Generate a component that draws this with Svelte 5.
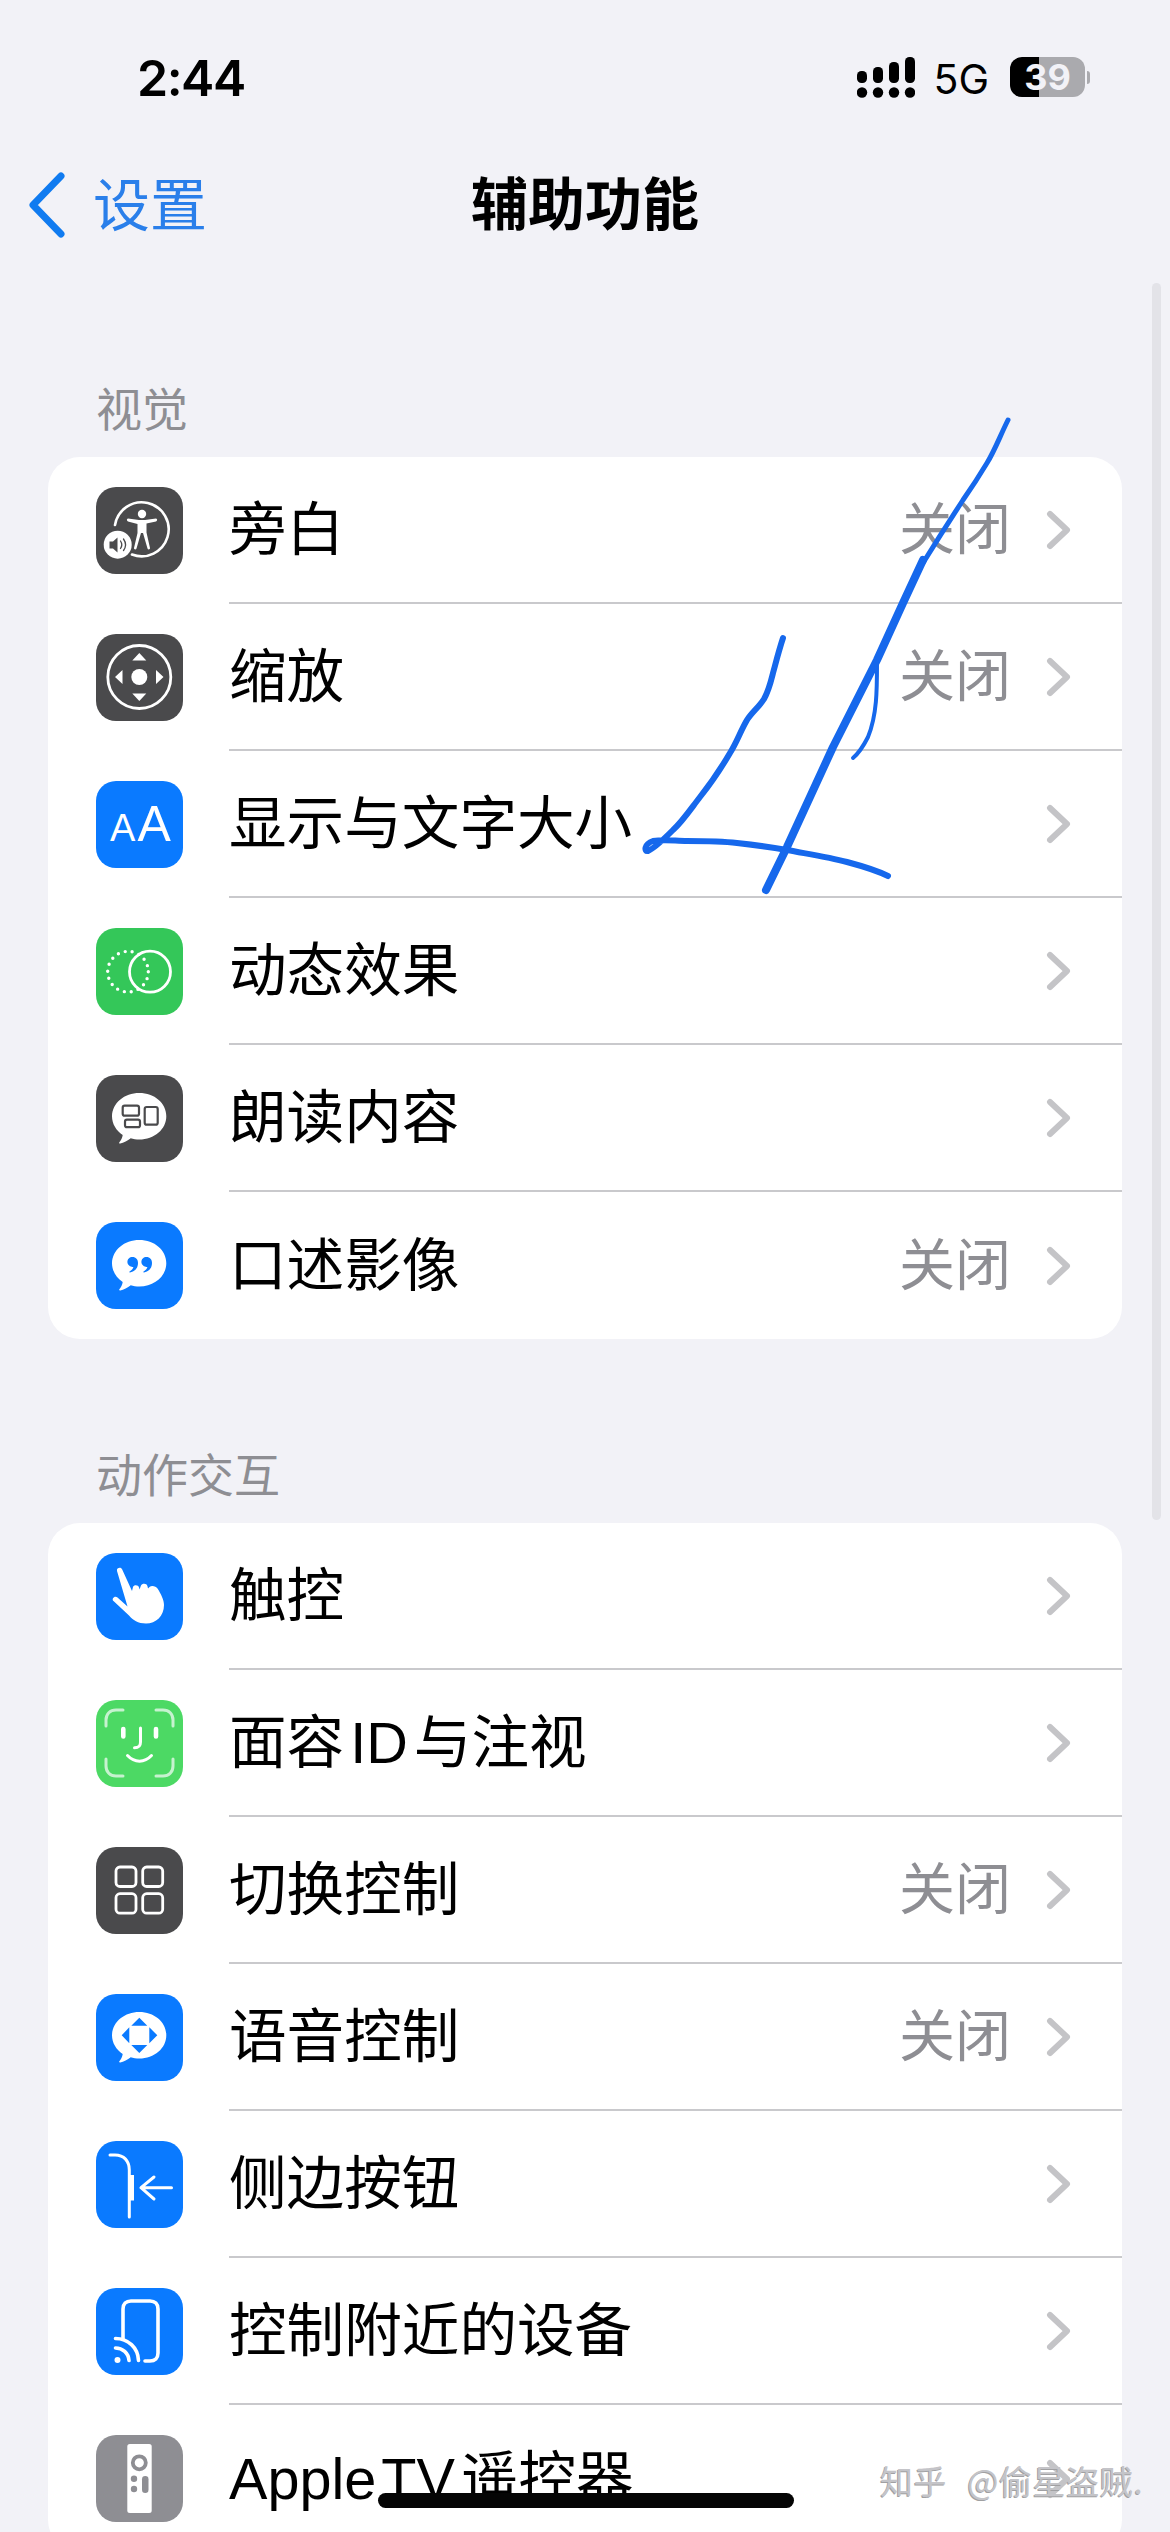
<script lang="ts">
	const cjk = '"Noto Sans CJK SC"';

	const visual = [
		{ icon: 'voiceover', label: '旁白', value: '关闭' },
		{ icon: 'zoom', label: '缩放', value: '关闭' },
		{ icon: 'text', label: '显示与文字大小' },
		{ icon: 'motion', label: '动态效果' },
		{ icon: 'spoken', label: '朗读内容' },
		{ icon: 'audio', label: '口述影像', value: '关闭' }
	];

	const interaction = [
		{ icon: 'touch', label: '触控' },
		{ icon: 'face', label: '面容 ID 与注视' },
		{ icon: 'switch', label: '切换控制', value: '关闭' },
		{ icon: 'voice', label: '语音控制', value: '关闭' },
		{ icon: 'side', label: '侧边按钮' },
		{ icon: 'nearby', label: '控制附近的设备' },
		{ icon: 'remote', label: 'Apple TV 遥控器' }
	];

	const iconBg: Record<string, string> = {
		voiceover: 'dark',
		zoom: 'dark',
		text: 'blue',
		motion: 'green',
		spoken: 'dark',
		audio: 'blue',
		touch: 'blue',
		face: 'lime',
		switch: 'dark',
		voice: 'blue',
		side: 'blue',
		nearby: 'blue',
		remote: 'grey'
	};

	const bubble = 'M43.3 18c15 0 27 10 27 23.2 0 13-12 23.3-27 23.3-3 0-6-.4-8.6-1.2-3 2.500-7 4.700-10.500 5.300-1 .1-1.400-.7-.8-1.400 1.500-1.800 3-4.500 3.300-7.300-6.500-4.300-10.700-11-10.700-18.700C16.300 28 28.300 18 43.300 18z';
</script>

{#snippet glyph(name: string)}
	<svg class="glyph" viewBox="0 0 87 87">
		{#if name === 'voiceover'}
			<path class="line" d="M19 38A27 27 0 1 1 36 67.500" stroke-width="2.600" />
			<circle class="fill" cx="46" cy="27" r="4.200" />
			<path class="fill" d="M32 31.500l11 1.500h6l11-1.500c1.500 0 1.500 2.500 0 3l-9.500 2v9l3.500 15.500c.3 1.500-2 2-2.500.6L47 46h-2l-4.500 15.600c-.5 1.400-2.800.9-2.500-.6L41.500 46v-9L32 34.500c-1.500-.5-1.500-3 0-3z" />
			<circle class="fill" cx="21.700" cy="57.700" r="14" />
			<path class="ink" d="M13.500 54.500h3.500l4.500-4v15l-4.500-4h-3.500z" />
			<path class="ink-line" d="M24.500 54c1.500 2.200 1.500 5.300 0 7.500M27.500 52c2.500 3.500 2.500 8 0 11.500" stroke-width="1.300" />
		{:else if name === 'zoom'}
			<circle class="line" cx="43.300" cy="43" r="31.500" stroke-width="2.800" />
			<circle class="fill" cx="43.300" cy="43" r="8" />
			<path class="fill" d="M43.300 19l7 7.500h-14zM43.300 67l7-7.500h-14zM19 43l7.500-7v14zM67.500 43l-7.500-7v14z" />
		{:else if name === 'text'}
			<text class="aa small" x="14" y="60">A</text>
			<text class="aa big" x="41.500" y="60">A</text>
		{:else if name === 'motion'}
			<circle class="dots" cx="32" cy="43.700" r="20.300" stroke-width="3.400" />
			<circle class="line" cx="54" cy="43.700" r="20.500" stroke-width="2.800" />
		{:else if name === 'spoken'}
			<path class="fill" d={bubble} />
			<rect class="ink-line" x="26.700" y="30.700" width="16.300" height="10" rx="2" stroke-width="2.200" />
			<rect class="ink-line" x="29" y="44.700" width="15" height="7.500" rx="2" stroke-width="2.200" />
			<rect class="ink-line" x="48.700" y="32" width="13" height="17.700" rx="2" stroke-width="2.200" />
		{:else if name === 'audio'}
			<path class="fill" d={bubble} />
			<path class="ink" d="M36.500 35c3.300 0 5.500 2.500 5.500 6 0 5-3 8.500-8 9.500-.7.1-1-.6-.4-1 2-1.200 3.400-2.800 3.800-4.500-3.300 0-6-2.200-6-5 0-3 2.200-5 5.100-5zM50.500 35c3.300 0 5.500 2.500 5.500 6 0 5-3 8.500-8 9.500-.7.1-1-.6-.4-1 2-1.200 3.400-2.800 3.800-4.500-3.300 0-6-2.200-6-5 0-3 2.200-5 5.100-5z" />
		{:else if name === 'touch'}
			<path class="fill" d="M21 18c-.8-3 4-4.500 5.200-1.500L36 38l1-4c.7-2.500 5.500-2.500 6 .5l.5 2 1.500-4c1-2.500 6-2.500 6.500.7l.5 2.300 1.500-1.500c2-2 6.500-1 8 1.500C65 41 68 47 68 52c0 11-8 18.500-18 18.500-8 0-13-3.500-17-8L17.500 48c-2.500-2.500 1.500-6 4-3.500l10 9z" />
		{:else if name === 'face'}
			<path class="soft" d="M10 26v-6c0-6 4-10 10-10h7M60 10h7c6 0 10 4 10 10v6M10 59v7c0 6 4 10 10 10h7M60 76h7c6 0 10-4 10-10v-7" stroke-width="3" />
			<path class="line" d="M27.300 29v7.500M60 29v7.500" stroke-width="4.600" />
			<path class="line" d="M44.500 28v14c0 4-1.500 5.800-6 5.800M31.500 55.500c7 7.500 17 7.500 24 0" stroke-width="3" />
		{:else if name === 'switch'}
			<rect class="line" x="20" y="20" width="20" height="19.500" rx="4" stroke-width="2.800" />
			<rect class="line" x="46.700" y="20" width="20" height="19.500" rx="4" stroke-width="2.800" />
			<rect class="line" x="20" y="46.700" width="20" height="19.500" rx="4" stroke-width="2.800" />
			<rect class="line" x="46.700" y="46.700" width="20" height="19.500" rx="4" stroke-width="2.800" />
		{:else if name === 'voice'}
			<path class="fill" d={bubble} />
			<path class="ink" d="M43.300 23.700l8 8h-16zM43.300 59l8-8h-16zM25.700 41.300l7.600-8v16zM61.300 41.300l-8-8v16z" />
		{:else if name === 'side'}
			<path class="line" d="M14 14h5c9 0 14.300 6 14.300 15v47" stroke-width="3" />
			<path class="fill" d="M33 34h5v25.500h-5z" />
			<path class="line" d="M75.500 46.700H45M58 36L45 46.700 58 58" stroke-width="3" />
		{:else if name === 'nearby'}
			<path class="line" d="M27 51V21c0-5 3-8 8-8h19c5 0 8 3 8 8v44c0 5-3 8-8 8h-5" stroke-width="3.600" />
			<circle class="fill" cx="21.500" cy="72" r="3" />
			<path class="line" d="M19.500 60c7 0 13 5 13.500 12.500M19.500 50.500c12.500 0 22.500 9 23 22" stroke-width="3.600" />
		{:else if name === 'remote'}
			<rect class="fill" x="31.300" y="9" width="24.400" height="69" rx="2.500" />
			<circle class="ink-line" cx="43.300" cy="27.800" r="6.500" stroke-width="3.800" />
			<circle class="ink" cx="38" cy="43.800" r="3.200" />
			<circle class="ink" cx="38" cy="54" r="3.200" />
			<rect class="ink" x="46" y="41" width="6.500" height="17" rx="3.250" />
		{/if}
	</svg>
{/snippet}

{#snippet group(rows: { icon: string; label: string; value?: string }[])}
	<ul class="card">
		{#each rows as row}
			<li class="row">
				<span class="icon {iconBg[row.icon]}">{@render glyph(row.icon)}</span>
				<div class="row-body">
					<span class="label">{row.label}</span>
					{#if row.value}
						<span class="value">{row.value}</span>
					{/if}
					<svg class="chevron" viewBox="0 0 26 40">
						<path d="M4 4l17 16L4 36" />
					</svg>
				</div>
			</li>
		{/each}
	</ul>
{/snippet}

<div class="screen" style:--cjk={cjk}>
	<header class="status">
		<span class="time">2:44</span>
		<div class="status-right">
			<svg class="signal" viewBox="0 0 58 41">
				<rect x="0" y="14" width="10" height="12" rx="4.500" />
				<rect x="16" y="10" width="10" height="16" rx="4.500" />
				<rect x="32" y="5" width="10" height="21" rx="4.500" />
				<rect x="48" y="0" width="10" height="26" rx="4.500" />
				<circle cx="5" cy="35.500" r="5.200" />
				<circle cx="21" cy="35.500" r="5.200" />
				<circle cx="37" cy="35.500" r="5.200" />
				<circle cx="53" cy="35.500" r="5.200" />
			</svg>
			<span class="net">5G</span>
			<div class="battery">
				<span class="level">39</span>
			</div>
			<span class="battery-tip"></span>
		</div>
	</header>

	<nav class="nav">
		<a class="back" href="#back">
			<svg class="back-arrow" viewBox="0 0 40 66">
				<path d="M34 4L6 33l28 29" />
			</svg>
			<span class="back-text">设置</span>
		</a>
		<h1 class="title">辅助功能</h1>
	</nav>

	<h2 class="section first">视觉</h2>
	{@render group(visual)}

	<h2 class="section">动作交互</h2>
	{@render group(interaction)}

	<span class="scrollbar"></span>

	<svg class="scribble" viewBox="0 0 1170 2532">
		<path stroke-width="5" d="M1008 420C1000 436 995 450 987 463C978 478 970 490 963 500C950 520 936 542 923 563" />
		<path stroke-width="8" d="M923 560L903 603L877 660L833 747L787 847L766 890" />
		<path stroke-width="4" d="M877 663C877 690 877 715 868 737C864 745 860 752 853 758" />
		<path stroke-width="6" d="M783 638C779 650 776 662 773 673C770 685 769 690 764 699C759 707 752 712 747 720C740 732 737 742 730 753C720 770 712 782 700 797C690 810 682 822 673 830C665 838 655 848 648 851C644 852 644 844 653 841C665 839 675 841 687 841C705 841 720 841 737 843C755 845 770 847 787 850C808 854 828 857 847 862C862 866 876 870 888 876" />
	</svg>

	<span class="watermark">知乎 @偷星盗贼.</span>
	<span class="home-bar"></span>
</div>

<style>
	:global(body) {
		margin: 0;
		background: #f2f2f7;
	}

	.screen {
		position: relative;
		width: 1170px;
		height: 2532px;
		overflow: hidden;
		background: #f2f2f7;
		color: #000;
		font-family: "Liberation Sans", "Noto Sans CJK SC", sans-serif;
	}

	.status {
		height: 157px;
		display: flex;
		justify-content: space-between;
		padding: 52px 80px 0 137px;
		box-sizing: border-box;
	}

	.time {
		font-family: Inter, sans-serif;
		font-size: 50px;
		font-weight: 600;
		letter-spacing: -1.5px;
		line-height: 52px;
	}

	.status-right {
		display: flex;
		align-items: flex-start;
		padding-top: 5px;
	}

	.signal {
		width: 58px;
		height: 41px;
	}

	.net {
		font-family: Inter, sans-serif;
		font-size: 41px;
		line-height: 41px;
		margin: 2px 0 0 18px;
	}

	.battery {
		width: 75px;
		height: 40px;
		margin-left: 21px;
		border-radius: 12px;
		background: linear-gradient(90deg, #000 29px, #aaaaae 29px);
		display: flex;
		align-items: center;
		justify-content: center;
	}

	.level {
		color: #f2f2f7;
		font-family: Inter, sans-serif;
		font-size: 36px;
		font-weight: 700;
		line-height: 40px;
	}

	.battery-tip {
		width: 3px;
		height: 13px;
		margin: 14px 0 0 2px;
		background: #aaaaae;
		border-radius: 0 3px 3px 0;
	}

	.nav {
		position: relative;
		height: 96px;
		display: flex;
		align-items: center;
		justify-content: center;
	}

	.back {
		position: absolute;
		left: 27px;
		top: 0;
		height: 96px;
		display: flex;
		align-items: center;
		gap: 26px;
		color: #2a7fea;
		font-size: 57px;
		text-decoration: none;
		font-family: var(--cjk), sans-serif;
	}

	.back-text {
		margin-bottom: 8px;
	}

	.back-arrow {
		width: 40px;
		height: 66px;
		fill: none;
		stroke: #107bf0;
		stroke-width: 7;
		stroke-linecap: round;
		stroke-linejoin: round;
	}

	.title {
		margin: 0 0 10px;
		font-family: var(--cjk), sans-serif;
		font-size: 57px;
		font-weight: 700;
		line-height: 86px;
	}

	.section {
		margin: 105px 0 0;
		padding-left: 96px;
		height: 79px;
		font-family: var(--cjk), sans-serif;
		font-size: 46px;
		font-weight: 400;
		line-height: 56px;
		color: #8e8e93;
	}

	.section.first {
		margin-top: 125px;
	}

	.card {
		list-style: none;
		margin: 0 48px;
		padding: 0;
		background: #fff;
		border-radius: 32px;
		overflow: hidden;
	}

	.row {
		display: flex;
		align-items: center;
		height: 147px;
		padding-left: 48px;
	}

	.row-body {
		flex: 1;
		height: 100%;
		margin-left: 46px;
		padding-right: 50px;
		display: flex;
		align-items: center;
		box-sizing: border-box;
		border-bottom: 2px solid #c9c9cc;
	}

	.row:last-child .row-body {
		border-bottom: none;
	}

	.icon {
		width: 87px;
		height: 87px;
		flex: none;
		border-radius: 20px;
		display: block;
	}

	.icon.dark { background: #4a4a4c; --ink: #4a4a4c; }
	.icon.blue { background: #0a7aff; --ink: #0a7aff; }
	.icon.green { background: #34c759; --ink: #34c759; }
	.icon.lime { background: #4cd964; --ink: #4cd964; }
	.icon.grey { background: #8e8e93; --ink: #8e8e93; }

	.glyph {
		display: block;
		width: 87px;
		height: 87px;
	}

	.fill { fill: #fff; }
	.ink { fill: var(--ink); }

	.line,
	.ink-line,
	.soft,
	.dots {
		fill: none;
		stroke-linecap: round;
		stroke-linejoin: round;
	}

	.line { stroke: #fff; }
	.ink-line { stroke: var(--ink); }
	.soft { stroke: #c6f2cf; }
	.dots { stroke: #fff; stroke-dasharray: 0 7.090; }

	.aa {
		fill: #fff;
		font-family: "Liberation Sans", sans-serif;
	}

	.aa.small { font-size: 38px; }
	.aa.big { font-size: 50px; }

	.label {
		flex: 1;
		font-family: "Liberation Sans", var(--cjk), sans-serif;
		font-size: 57.6px;
		word-spacing: -10px;
		line-height: 80px;
		white-space: nowrap;
	}

	.value {
		font-family: var(--cjk), sans-serif;
		font-size: 56px;
		line-height: 80px;
		color: #8e8e93;
		margin: 0 35px 10px 0;
	}

	.chevron {
		width: 26px;
		height: 40px;
		fill: none;
		stroke: #c4c4c7;
		stroke-width: 6;
		stroke-linecap: round;
		stroke-linejoin: round;
	}

	.scrollbar {
		position: absolute;
		left: 1152px;
		top: 283px;
		width: 9px;
		height: 1237px;
		border-radius: 5px;
		background: #e3e3e8;
	}

	.scribble {
		position: absolute;
		inset: 0;
		width: 1170px;
		height: 2532px;
		fill: none;
		stroke: #1668ec;
		stroke-linecap: round;
		stroke-linejoin: round;
		pointer-events: none;
	}

	.watermark {
		position: absolute;
		left: 880px;
		top: 2458px;
		font-family: var(--cjk), sans-serif;
		font-size: 33px;
		letter-spacing: 0.6px;
		word-spacing: 12px;
		line-height: 44px;
		color: #c4c4c8;
		text-shadow: -1px 1px 0 #a0a0a2;
		white-space: nowrap;
	}

	.home-bar {
		position: absolute;
		left: 378px;
		top: 2493px;
		width: 416px;
		height: 15px;
		border-radius: 8px;
		background: #050505;
	}
</style>
